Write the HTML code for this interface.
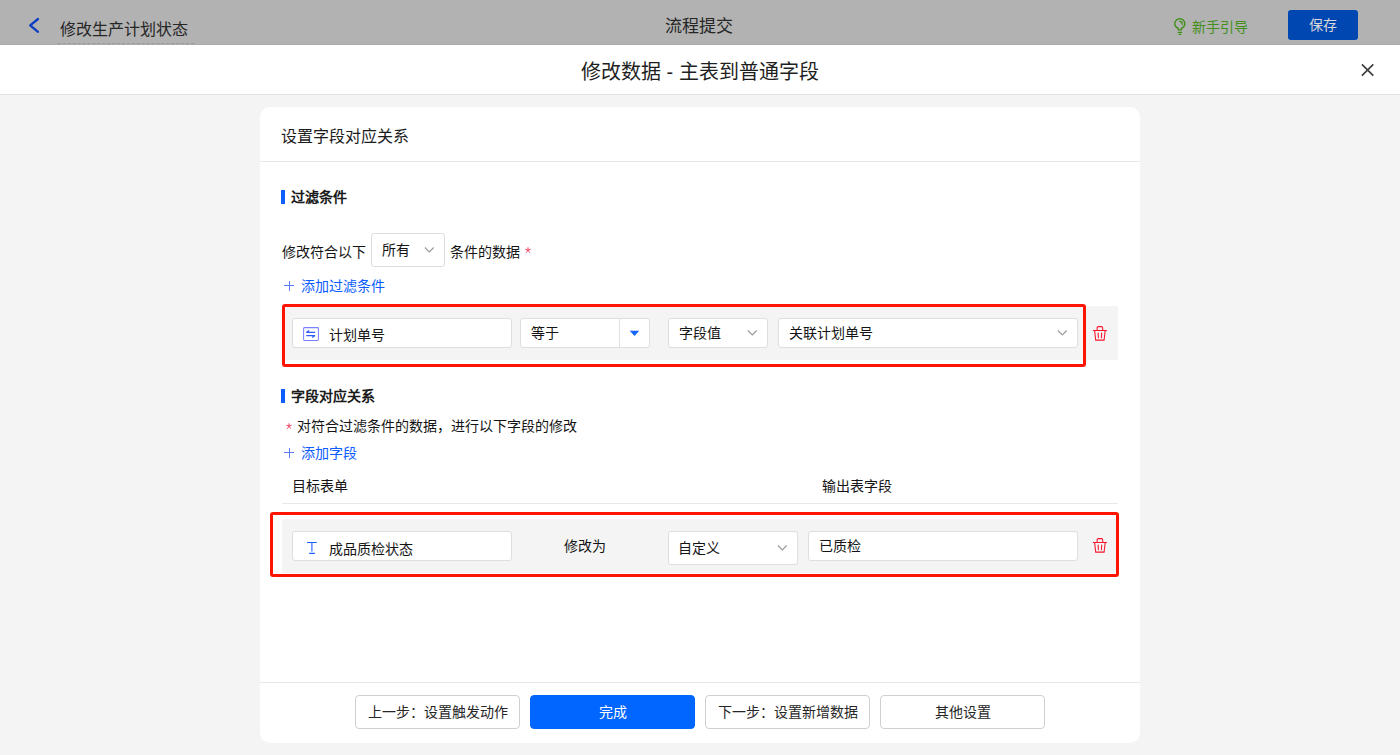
<!DOCTYPE html>
<html lang="zh-CN"><head><meta charset="utf-8">
<style>
*{box-sizing:border-box;margin:0;padding:0}
html,body{width:1400px;height:755px;overflow:hidden;background:#f4f4f4;font-family:"Liberation Sans",sans-serif;color:#141414}
.a{position:absolute;white-space:nowrap}
.t14{font-size:14px;line-height:20px}
.t16{font-size:16px;line-height:20px}
#topbar{position:absolute;left:0;top:0;width:1400px;height:45px;background:#b2b2b2;border-bottom:1px solid #ababab}
#mhead{position:absolute;left:0;top:45px;width:1400px;height:50px;background:#fff;border-bottom:1px solid #e3e3e3}
#card{position:absolute;left:260px;top:107px;width:880px;height:636px;background:#fff;border-radius:10px}
.line{position:absolute;height:1px;background:#e8e8e8}
.bar{position:absolute;width:4px;height:14px;background:#0f5fff}
.b{font-weight:bold}
.link{color:#0a5cff}
.inp{position:absolute;background:#fff;border:1px solid #dedede;border-radius:3px}
.row{position:absolute;background:#f4f4f4;border-radius:2px}
.red{position:absolute;border:3px solid #ff1400;border-radius:3px}
.btn{position:absolute;top:695px;width:165px;height:34px;border:1px solid #d0d0d0;border-radius:4px;background:#fff;font-size:14px;line-height:32px;text-align:center;color:#262626}
</style></head>
<body>
<div id="topbar">
  <svg class="a" style="left:28px;top:17px" width="12" height="17" viewBox="0 0 12 17"><path d="M10 2 L2.2 8.3 L10 14.8" fill="none" stroke="#0c3ec2" stroke-width="2.3" stroke-linecap="round" stroke-linejoin="round"/></svg>
  <div class="a t16" style="left:60px;top:20px;color:#262626">修改生产计划状态</div>
  <div class="a" style="left:58px;top:43px;width:136px;border-top:1px dashed #9a9a9a"></div>
  <div class="a" style="left:665px;top:17px;font-size:17px;line-height:20px;color:#262626">流程提交</div>
  <svg class="a" style="left:1168px;top:14px" width="24" height="24" viewBox="0 0 24 24"><path d="M10.2 15.9 V14.4 C8.2 13.2 6.7 11.7 6.7 9.9 A5.1 5.1 0 0 1 16.9 9.9 C16.9 11.7 15.4 13.2 13.4 14.4 V15.9 Z" fill="none" stroke="#408f1a" stroke-width="1.4" stroke-linejoin="round"/><path d="M10.2 18.4 H13.6 M11 20.3 H12.8" stroke="#408f1a" stroke-width="1.3" stroke-linecap="round"/><path d="M11.7 7.4 A3 3 0 0 1 14.4 10.3" fill="none" stroke="#408f1a" stroke-width="1.3" stroke-linecap="round"/></svg>
  <div class="a t14" style="left:1192px;top:17px;color:#42901a">新手引导</div>
  <div class="a" style="left:1288px;top:10px;width:70px;height:30px;background:#0047b2;border-radius:3px;color:#d9d9d9;font-size:14px;line-height:30px;text-align:center">保存</div>
</div>
<div id="mhead">
  <div class="a" style="left:581px;top:17px;font-size:20px;line-height:20px;color:#1f1f1f">修改数据 - 主表到普通字段</div>
  <svg class="a" style="left:1360px;top:18px" width="15" height="15" viewBox="0 0 15 15"><path d="M1.9 1.4 L13.3 12.6 M13.3 1.4 L1.9 12.6" stroke="#3c3c3c" stroke-width="1.6"/></svg>
</div>

<div id="card"></div>
<!-- card header -->
<div class="a t16" style="left:281px;top:127px;color:#1c1c1c">设置字段对应关系</div>
<div class="line" style="left:260px;top:161px;width:880px"></div>

<div class="bar" style="left:281px;top:190px"></div>
<div class="a t14 b" style="left:291px;top:187px;color:#1a1a1a">过滤条件</div>

<div class="a t14" style="left:282px;top:242px">修改符合以下</div>
<div class="inp" style="left:371px;top:233px;width:74px;height:34px"></div>
<div class="a t14" style="left:382px;top:240px">所有</div>
<svg class="a" style="left:424px;top:246.5px" width="11" height="7" viewBox="0 0 11 7"><path d="M0.9 0.5 L5.3 4.9 L9.7 0.5" fill="none" stroke="#999" stroke-width="1.1"/></svg>
<div class="a t14" style="left:450px;top:242px">条件的数据</div>
<svg class="a" style="left:525px;top:247px" width="6" height="6" viewBox="0 0 6 6"><path d="M3 0.3 V3 M3 3 L0.4 2.2 M3 3 L5.6 2.2 M3 3 L1.4 5.6 M3 3 L4.6 5.6" stroke="#f43a5a" stroke-width="0.95"/></svg>

<svg class="a" style="left:284px;top:281px" width="10" height="10" viewBox="0 0 10 10"><path d="M0 4.5 H10 M5.5 0 V10" stroke="#5c7cff" stroke-width="1"/></svg>
<div class="a t14 link" style="left:301px;top:276px">添加过滤条件</div>

<!-- filter row -->
<div class="row" style="left:282px;top:306px;width:836px;height:54px"></div>
<div class="inp" style="left:292px;top:318px;width:220px;height:30px"></div>
<svg class="a" style="left:303px;top:327px" width="16" height="14" viewBox="0 0 16 14"><rect x="0.6" y="0.6" width="14.8" height="12.8" rx="0.8" fill="none" stroke="#7c80ff" stroke-width="1.05"/><path d="M3.3 5.4 H12.1 M3.3 5.4 L6.2 3.4 M12.1 8.6 H3.3 M12.1 8.6 L9.2 10.6" fill="none" stroke="#2f5cff" stroke-width="1.2"/></svg>
<div class="a t14" style="left:329px;top:325px">计划单号</div>

<div class="inp" style="left:520px;top:318px;width:130px;height:30px"></div>
<div class="a" style="left:619px;top:319px;width:1px;height:28px;background:#e2e2e2"></div>
<div class="a t14" style="left:531px;top:323px">等于</div>
<svg class="a" style="left:629px;top:330px" width="11" height="7" viewBox="0 0 11 7"><path d="M0.7 0.8 H10.3 L5.5 6 Z" fill="#1466ff"/></svg>

<div class="inp" style="left:668px;top:318px;width:100px;height:30px"></div>
<div class="a t14" style="left:679px;top:323px">字段值</div>
<svg class="a" style="left:747px;top:329.5px" width="11" height="7" viewBox="0 0 11 7"><path d="M0.9 0.5 L5.3 4.9 L9.7 0.5" fill="none" stroke="#999" stroke-width="1.1"/></svg>

<div class="inp" style="left:778px;top:318px;width:300px;height:30px"></div>
<div class="a t14" style="left:789px;top:323px">关联计划单号</div>
<svg class="a" style="left:1057px;top:329.7px" width="11" height="7" viewBox="0 0 11 7"><path d="M0.9 0.5 L5.3 4.9 L9.7 0.5" fill="none" stroke="#999" stroke-width="1.1"/></svg>

<svg class="a" style="left:1092px;top:325px" width="16" height="17" viewBox="0 0 16 17"><path d="M0.9 5.4 H14.9 M5.1 5.4 V2.9 Q5.1 1.6 6.4 1.6 H9.4 Q10.7 1.6 10.7 2.9 V5.4 M2.6 5.4 L3.7 15.1 H12.1 L13.2 5.4 M6.1 7.6 L6.4 13.3 M9.7 7.6 L9.4 13.3" fill="none" stroke="#f5142d" stroke-width="1.05"/></svg>

<div class="red" style="left:282px;top:304px;width:804px;height:63px"></div>

<!-- section 2 -->
<div class="bar" style="left:281px;top:389px"></div>
<div class="a t14 b" style="left:291px;top:386px;color:#1a1a1a">字段对应关系</div>
<svg class="a" style="left:286px;top:423px" width="6" height="6" viewBox="0 0 6 6"><path d="M3 0.3 V3 M3 3 L0.4 2.2 M3 3 L5.6 2.2 M3 3 L1.4 5.6 M3 3 L4.6 5.6" stroke="#f43a5a" stroke-width="0.95"/></svg>
<div class="a t14" style="left:297px;top:416px">对符合过滤条件的数据，进行以下字段的修改</div>
<svg class="a" style="left:284px;top:448px" width="10" height="10" viewBox="0 0 10 10"><path d="M0 4.5 H10 M5.5 0 V10" stroke="#5c7cff" stroke-width="1"/></svg>
<div class="a t14 link" style="left:301px;top:443px">添加字段</div>

<div class="a t14" style="left:292px;top:476px">目标表单</div>
<div class="a t14" style="left:822px;top:476px">输出表字段</div>
<div class="line" style="left:282px;top:503px;width:836px"></div>

<div class="row" style="left:282px;top:519px;width:836px;height:54px"></div>
<div class="inp" style="left:292px;top:531px;width:220px;height:30px"></div>
<svg class="a" style="left:306px;top:541px" width="12" height="14" viewBox="0 0 12 14"><path d="M1 1.5 H10.8 M5.9 1.5 V10.6 M3.2 12.4 H8.9" fill="none" stroke="#1b5fff" stroke-width="1.1"/></svg>
<div class="a t14" style="left:329px;top:539px">成品质检状态</div>
<div class="a t14" style="left:564px;top:536px">修改为</div>
<div class="inp" style="left:668px;top:531px;width:130px;height:34px"></div>
<div class="a t14" style="left:678px;top:538px">自定义</div>
<svg class="a" style="left:777px;top:544.5px" width="11" height="7" viewBox="0 0 11 7"><path d="M0.9 0.5 L5.3 4.9 L9.7 0.5" fill="none" stroke="#999" stroke-width="1.1"/></svg>
<div class="inp" style="left:808px;top:531px;width:270px;height:30px"></div>
<div class="a t14" style="left:819px;top:536px">已质检</div>
<svg class="a" style="left:1092px;top:537px" width="16" height="17" viewBox="0 0 16 17"><path d="M0.9 5.4 H14.9 M5.1 5.4 V2.9 Q5.1 1.6 6.4 1.6 H9.4 Q10.7 1.6 10.7 2.9 V5.4 M2.6 5.4 L3.7 15.1 H12.1 L13.2 5.4 M6.1 7.6 L6.4 13.3 M9.7 7.6 L9.4 13.3" fill="none" stroke="#f5142d" stroke-width="1.05"/></svg>
<div class="red" style="left:270px;top:512px;width:849px;height:65px"></div>

<!-- footer -->
<div class="line" style="left:260px;top:682px;width:880px"></div>
<div class="btn" style="left:355px">上一步：设置触发动作</div>
<div class="btn" style="left:530px;background:#0066ff;border-color:#0066ff;color:#fff">完成</div>
<div class="btn" style="left:705px">下一步：设置新增数据</div>
<div class="btn" style="left:880px">其他设置</div>
</body></html>
